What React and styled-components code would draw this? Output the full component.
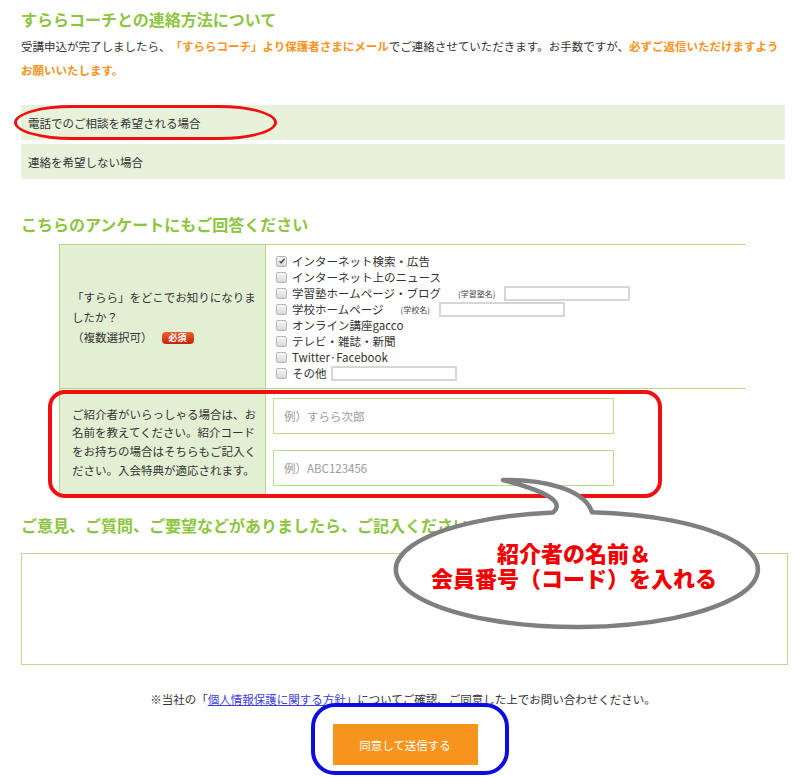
import React from 'react';
import styled, { createGlobalStyle } from 'styled-components';

const GlobalStyle = createGlobalStyle`
  html, body {
    margin: 0;
    padding: 0;
    background: #fff;
  }
  body {
    font-family: "Noto Sans CJK JP", "Liberation Sans", sans-serif;
    color: #333;
    text-spacing-trim: space-all;
  }
`;

const options = [
  { label: 'インターネット検索・広告', checked: true },
  { label: 'インターネット上のニュース' },
  { label: '学習塾ホームページ・ブログ', note: '(学習塾名)', noteGap: 17, field: true },
  { label: '学校ホームページ', note: '(学校名)', noteGap: 17, field: true },
  { label: 'オンライン講座gacco' },
  { label: 'テレビ・雑誌・新聞' },
  { label: 'Twitter·Facebook' },
  { label: 'その他', field: true },
];

const CheckMark = () => (
  <svg width="8" height="8" viewBox="0 0 8 8">
    <path d="M1.5 4.2 L3.2 5.8 L6.5 1.8" fill="none" stroke="#444" strokeWidth="1.4" />
  </svg>
);

const SpeechBubble = () => (
  <BubbleWrap>
    <svg width="400" height="165" viewBox="380 470 400 165">
      <path
        d="M 553 512.5 C 562 505, 558 494, 503 480 C 545 479, 585 490, 592 512.2 A 181 57.5 0 1 1 553 512.5 Z"
        fill="#fff"
        stroke="#7f7f7f"
        strokeWidth="4.5"
        strokeLinejoin="round"
      />
    </svg>
    <BubbleText>
      紹介者の名前＆<br />会員番号（コード）を入れる
    </BubbleText>
  </BubbleWrap>
);

const App = () => {
  return (
    <Page>
      <GlobalStyle />
      <Heading>すららコーチとの連絡方法について</Heading>
      <Lead>
        受講申込が完了しましたら、<Em>「すららコーチ」より保護者さまにメール</Em>でご連絡させていただきます。お手数ですが、<Em>必ずご返信いただけますようお願いいたします。</Em>
      </Lead>

      <ContactList>
        <ContactRow>
          電話でのご相談を希望される場合
          <RedEllipse />
        </ContactRow>
        <ContactRow>連絡を希望しない場合</ContactRow>
      </ContactList>

      <Heading $top={33}>こちらのアンケートにもご回答ください</Heading>
      <Survey>
        <SurveyRow>
          <LabelCell $lh={20}>
            <div>
              「すらら」をどこでお知りになりましたか？<br />
              （複数選択可）<Badge>必須</Badge>
            </div>
          </LabelCell>
          <OptionCell>
            {options.map((o, i) => (
              <Option key={i}>
                <Check>{o.checked ? <CheckMark /> : null}</Check>
                <span>{o.label}</span>
                {o.note ? <SmallNote $gap={o.noteGap}>{o.note}</SmallNote> : null}
                {o.field ? <SmallInput $gap={o.note ? 0 : 4} /> : null}
              </Option>
            ))}
          </OptionCell>
        </SurveyRow>
        <SurveyRow>
          <LabelCell $lh={18.7}>
            <div>
              ご紹介者がいらっしゃる場合は、お名前を教えてください。紹介コードをお持ちの場合はそちらもご記入ください。入会特典が適応されます。
            </div>
          </LabelCell>
          <FieldCell>
            <TextInput placeholder="例）すらら次郎" />
            <TextInput placeholder="例）ABC123456" />
          </FieldCell>
          <RedFrame />
        </SurveyRow>
      </Survey>

      <Heading $top={18}>ご意見、ご質問、ご要望などがありましたら、ご記入ください</Heading>
      <Comment />

      <Note>
        ※当社の「<PolicyLink href="#">個人情報保護に関する方針</PolicyLink>」についてご確認、ご同意した上でお問い合わせください。
      </Note>
      <SubmitArea>
        <SubmitHolder>
          <SubmitButton type="button">同意して送信する</SubmitButton>
          <BlueFrame />
        </SubmitHolder>
      </SubmitArea>

      <SpeechBubble />
    </Page>
  );
};

const Page = styled.div`
  position: relative;
  width: 800px;
  height: 777px;
  box-sizing: border-box;
  padding: 7px 15px 0 21px;
  overflow: hidden;
`;

const Heading = styled.h2`
  margin: ${p => p.$top || 0}px 0 0;
  font-size: 16px;
  line-height: 24px;
  font-weight: 700;
  color: #8cc540;
  white-space: nowrap;
`;

const Lead = styled.p`
  margin: 3px 0 0;
  font-size: 11.5px;
  line-height: 24px;
  color: #333;
`;

const Em = styled.span`
  color: #f7931e;
  font-weight: 700;
`;

const ContactList = styled.div`
  margin-top: 23px;
  display: flex;
  flex-direction: column;
  gap: 4px;
`;

const ContactRow = styled.div`
  position: relative;
  height: 35px;
  display: flex;
  align-items: center;
  padding-left: 7px;
  background: #e8f2db;
  font-size: 11.5px;
  color: #333;
`;

const RedEllipse = styled.span`
  position: absolute;
  left: -7px;
  top: 0;
  width: 263px;
  height: 35px;
  box-sizing: border-box;
  border: 3px solid #f01010;
  border-radius: 60px / 18px;
`;

const Survey = styled.div`
  margin: 8px 0 0 38px;
  width: 686px;
  border-top: 1px solid #b4d98b;
  border-left: 1px solid #b4d98b;
`;

const SurveyRow = styled.div`
  position: relative;
  display: grid;
  grid-template-columns: 206px 1fr;
  & + & {
    border-top: 1px solid #b4d98b;
  }
`;

const LabelCell = styled.div`
  display: flex;
  align-items: center;
  box-sizing: border-box;
  padding: 0 6px 0 12px;
  background: #e3efd3;
  border-right: 1px solid #b4d98b;
  font-size: 11.5px;
  line-height: ${p => p.$lh}px;
  color: #333;
`;

const Badge = styled.span`
  display: inline-block;
  margin-left: 9px;
  padding: 0 7px;
  height: 12px;
  line-height: 12px;
  border-radius: 4px;
  background: linear-gradient(#f0602e, #c5230b);
  color: #fff;
  font-size: 9px;
  font-weight: 700;
  vertical-align: 1px;
`;

const OptionCell = styled.div`
  padding: 8px 0 7px 10px;
`;

const Option = styled.div`
  display: flex;
  align-items: center;
  height: 16px;
  font-size: 11.5px;
  color: #333;
  white-space: nowrap;
`;

const Check = styled.span`
  display: inline-flex;
  align-items: center;
  justify-content: center;
  width: 11px;
  height: 11px;
  box-sizing: border-box;
  margin-right: 5px;
  border: 1px solid #b8b8b8;
  border-radius: 2px;
  background: linear-gradient(#f6f6f6, #dadada);
`;

const SmallNote = styled.span`
  margin: 0 9px 0 ${p => p.$gap}px;
  font-size: 8px;
  color: #444;
`;

const SmallInput = styled.input`
  margin-left: ${p => p.$gap}px;
  width: 126px;
  height: 15px;
  box-sizing: border-box;
  border: 2px solid #d6d6d6;
  background: #fff;
  padding: 0;
`;

const FieldCell = styled.div`
  display: flex;
  flex-direction: column;
  gap: 16px;
  padding: 9px 0 9px 7px;
`;

const TextInput = styled.input`
  width: 341px;
  height: 36px;
  box-sizing: border-box;
  border: 1px solid #b7db90;
  padding: 0 10px;
  font-family: inherit;
  font-size: 11.5px;
  color: #333;
  outline: none;
  &::placeholder {
    color: #9a9a9a;
  }
`;

const RedFrame = styled.span`
  position: absolute;
  left: -12px;
  top: 1px;
  width: 614px;
  height: 108px;
  box-sizing: border-box;
  border: 4px solid #f01010;
  border-radius: 17px;
`;

const Comment = styled.textarea`
  display: block;
  margin-top: 16px;
  width: 767px;
  height: 112px;
  box-sizing: border-box;
  border: 1px solid #b7db90;
  resize: none;
  outline: none;
`;

const Note = styled.p`
  margin: 22px 0 0;
  font-size: 11.5px;
  line-height: 24px;
  text-align: center;
  color: #333;
`;

const PolicyLink = styled.a`
  color: #3d3dd8;
  text-decoration: underline;
`;

const SubmitArea = styled.div`
  margin-top: 13px;
  display: flex;
  justify-content: center;
`;

const SubmitHolder = styled.div`
  position: relative;
  margin-left: 4px;
`;

const SubmitButton = styled.button`
  display: block;
  width: 145px;
  height: 41px;
  border: none;
  background: #f7941d;
  color: #fff;
  font-family: inherit;
  font-size: 11.5px;
`;

const BlueFrame = styled.span`
  position: absolute;
  left: -22px;
  top: -21px;
  width: 198px;
  height: 72px;
  box-sizing: border-box;
  border: 4px solid #0d0de0;
  border-radius: 24px;
`;

const BubbleWrap = styled.div`
  position: absolute;
  left: 380px;
  top: 470px;
  width: 400px;
  height: 165px;
  pointer-events: none;
  svg {
    display: block;
  }
`;

const BubbleText = styled.div`
  position: absolute;
  left: 0;
  top: 70px;
  width: 388px;
  text-align: center;
  font-size: 22px;
  line-height: 25px;
  font-weight: 900;
  color: #f20000;
  white-space: nowrap;
`;

export default App;
